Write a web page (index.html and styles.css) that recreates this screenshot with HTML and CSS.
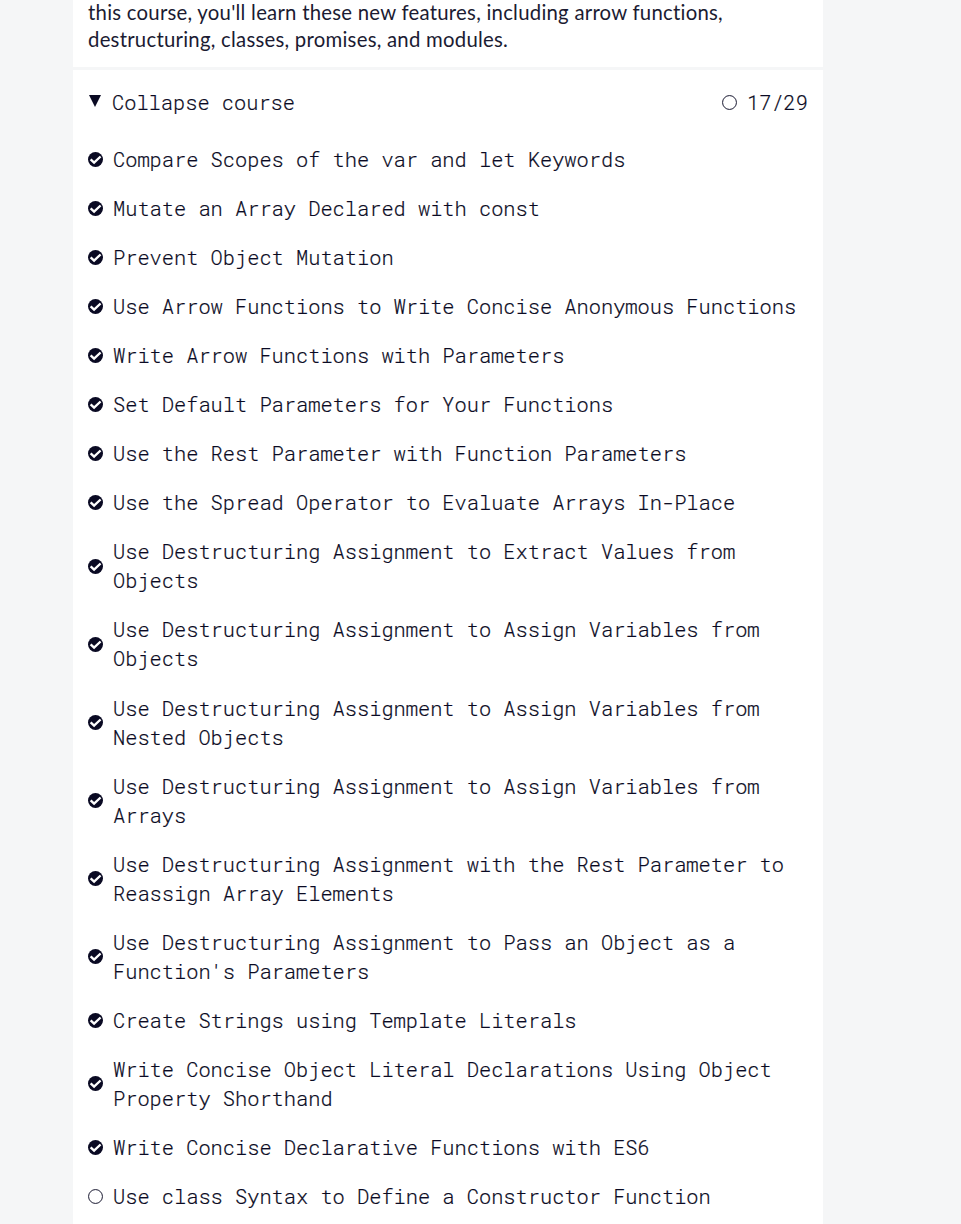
FILE: index.html
```html
<!DOCTYPE html>
<html lang="en">
<head>
<meta charset="utf-8">
<title>Course</title>
<link rel="stylesheet" href="styles.css">
</head>
<body>
<svg class="defs" aria-hidden="true">
  <symbol id="done" viewBox="0 0 16 16"><circle cx="8" cy="8" r="8"/><path class="tick" d="M2.8 7.8L6.5 11.4L13.4 4.8"/></symbol>
  <symbol id="todo" viewBox="0 0 16 16"><circle class="ring" cx="8" cy="8" r="7.4"/></symbol>
</svg>
<main class="block">
  <p class="intro">this course, you'll learn these new features, including arrow functions,<br>destructuring, classes, promises, and modules.</p>
  <section class="course">
    <header class="toggle">
      <svg class="arrow" viewBox="0 0 12 12"><path d="M0 0H12L6 12Z"/></svg>
      <span>Collapse course</span>
      <span class="count"><svg class="icon"><use href="#todo"/></svg>17/29</span>
    </header>
    <ul class="list">
      <li><svg class="icon"><use href="#done"/></svg><span>Compare Scopes of the var and let Keywords</span></li>
      <li><svg class="icon"><use href="#done"/></svg><span>Mutate an Array Declared with const</span></li>
      <li><svg class="icon"><use href="#done"/></svg><span>Prevent Object Mutation</span></li>
      <li><svg class="icon"><use href="#done"/></svg><span>Use Arrow Functions to Write Concise Anonymous Functions</span></li>
      <li><svg class="icon"><use href="#done"/></svg><span>Write Arrow Functions with Parameters</span></li>
      <li><svg class="icon"><use href="#done"/></svg><span>Set Default Parameters for Your Functions</span></li>
      <li><svg class="icon"><use href="#done"/></svg><span>Use the Rest Parameter with Function Parameters</span></li>
      <li><svg class="icon"><use href="#done"/></svg><span>Use the Spread Operator to Evaluate Arrays In-Place</span></li>
      <li><svg class="icon"><use href="#done"/></svg><span>Use Destructuring Assignment to Extract Values from Objects</span></li>
      <li><svg class="icon"><use href="#done"/></svg><span>Use Destructuring Assignment to Assign Variables from Objects</span></li>
      <li><svg class="icon"><use href="#done"/></svg><span>Use Destructuring Assignment to Assign Variables from Nested Objects</span></li>
      <li><svg class="icon"><use href="#done"/></svg><span>Use Destructuring Assignment to Assign Variables from Arrays</span></li>
      <li><svg class="icon"><use href="#done"/></svg><span>Use Destructuring Assignment with the Rest Parameter to Reassign Array Elements</span></li>
      <li><svg class="icon"><use href="#done"/></svg><span>Use Destructuring Assignment to Pass an Object as a Function's Parameters</span></li>
      <li><svg class="icon"><use href="#done"/></svg><span>Create Strings using Template Literals</span></li>
      <li><svg class="icon"><use href="#done"/></svg><span>Write Concise Object Literal Declarations Using Object Property Shorthand</span></li>
      <li><svg class="icon"><use href="#done"/></svg><span>Write Concise Declarative Functions with ES6</span></li>
      <li><svg class="icon"><use href="#todo"/></svg><span>Use class Syntax to Define a Constructor Function</span></li>
    </ul>
  </section>
</main>
</body>
</html>
```
FILE: styles.css
```css
* { box-sizing: border-box; }
body {
  margin: 0;
  height: 1224px;
  overflow: hidden;
  background: #f5f6f7;
  color: #1b1b32;
}
.defs { display: none; }
.block {
  width: 750px;
  height: 1224px;
  margin-left: 73px;
  background: #fff;
  overflow: hidden;
}
.intro {
  margin: -1px 0 0;
  height: 71px;
  padding-left: 15px;
  border-bottom: 3px solid #f5f6f7;
  font: 20.33px/27px Lato, sans-serif;
  letter-spacing: 0.25px;
  white-space: nowrap;
}
.course {
  font: 300 20.34px/29.04px "Roboto Mono", "Liberation Mono", monospace;
  color: #0a0a23;
  -webkit-text-stroke: 0.2px #0a0a23;
}
.toggle {
  display: flex;
  align-items: center;
  padding: 18px 15px 0 16px;
}
.arrow {
  width: 12px;
  height: 12px;
  margin: -3px 11px 0 0;
  fill: #0a0a23;
}
.count {
  display: flex;
  align-items: center;
  margin-left: auto;
}
.icon {
  flex: none;
  width: 15px;
  height: 15px;
  margin-right: 10px;
  fill: #0a0a23;
}
.ring { fill: none; stroke: #0a0a23; stroke-width: 1; }
.tick { fill: none; stroke: #fff; stroke-width: 2.5; }
.list {
  margin: 0;
  padding: 17.91px 15px 0;
  list-style: none;
}
.list li {
  display: flex;
  align-items: center;
  padding: 10px 0;
}
```
